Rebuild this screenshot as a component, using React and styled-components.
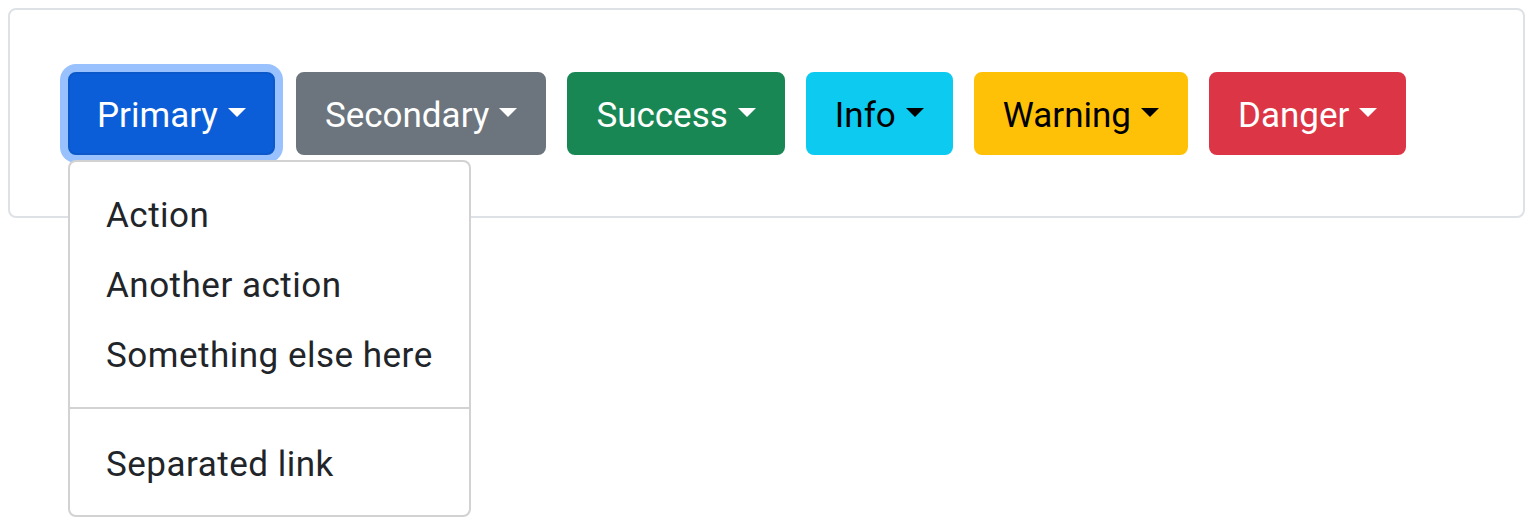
import React from "react";
import styled, { createGlobalStyle, css } from "styled-components";

const GlobalStyle = createGlobalStyle`
  html, body { min-height: 100%; }
  body {
    margin: 8px;
    background: #fff;
    font-family: "Roboto", "Liberation Sans", "Noto Sans", sans-serif;
    color: #212529;
  }
  #root { min-height: calc(100vh - 16px); }
  * { box-sizing: border-box; }
`;

const VARIANTS = {
  primary: { bg: "#0b5ed7", border: "#0a58ca", color: "#fff" },
  secondary: { bg: "#6c757d", border: "#6c757d", color: "#fff" },
  success: { bg: "#198754", border: "#198754", color: "#fff" },
  info: { bg: "#0dcaf0", border: "#0dcaf0", color: "#000" },
  warning: { bg: "#ffc107", border: "#ffc107", color: "#000" },
  danger: { bg: "#dc3545", border: "#dc3545", color: "#fff" },
};

const Page = styled.main`
  min-height: calc(100vh - 16px);
`;

const Card = styled.section`
  border: 2px solid #dee2e6;
  border-radius: 8px;
  padding: 62px 58px 61px;
`;

const Toolbar = styled.div`
  display: flex;
  gap: 21px;
  align-items: flex-start;
`;

const Dropdown = styled.div`
  position: relative;
`;

const Toggle = styled.button`
  display: inline-flex;
  align-items: center;
  font-family: inherit;
  font-size: 35px;
  line-height: 53px;
  padding: 15px 27px 11px;
  border: 2px solid ${(p) => VARIANTS[p.$variant].border};
  border-radius: 8px;
  background: ${(p) => VARIANTS[p.$variant].bg};
  color: ${(p) => VARIANTS[p.$variant].color};
  cursor: pointer;
  white-space: nowrap;
  ${(p) =>
    p.$open &&
    css`
      box-shadow: 0 0 0 8px rgba(49, 132, 253, 0.5);
    `}
`;

const Caret = styled.span`
  display: inline-block;
  margin-left: 10px;
  width: 0;
  height: 0;
  border-top: 9.5px solid currentColor;
  border-left: 9.5px solid transparent;
  border-right: 9.5px solid transparent;
  transform: translateY(-3px);
`;

const Menu = styled.div`
  position: absolute;
  top: calc(100% + 5px);
  left: 0;
  z-index: 10;
  min-width: 350px;
  background: #fff;
  border: 2px solid rgba(0, 0, 0, 0.175);
  border-radius: 8px;
  padding: 16.5px 0 17.5px;
`;

const MenuItem = styled.a`
  display: block;
  font-size: 35px;
  line-height: 52.5px;
  letter-spacing: 0.5px;
  padding: 11.5px 36px 6px;
  color: #212529;
  text-decoration: none;
  white-space: nowrap;
  cursor: pointer;
`;

const Divider = styled.hr`
  margin: 18.5px 0;
  border: 0;
  border-top: 2px solid rgba(0, 0, 0, 0.175);
  height: 0;
`;

const buttons = [
  ["primary", "Primary"],
  ["secondary", "Secondary"],
  ["success", "Success"],
  ["info", "Info"],
  ["warning", "Warning"],
  ["danger", "Danger"],
];

export default function App() {
  return (
    <Page>
      <GlobalStyle />
      <Card>
        <Toolbar>
          {buttons.map(([v, label], i) => (
            <Dropdown key={v}>
              <Toggle $variant={v} $open={i === 0}>
                {label}
                <Caret />
              </Toggle>
              {i === 0 && (
                <Menu>
                  <MenuItem>Action</MenuItem>
                  <MenuItem>Another action</MenuItem>
                  <MenuItem>Something else here</MenuItem>
                  <Divider />
                  <MenuItem>Separated link</MenuItem>
                </Menu>
              )}
            </Dropdown>
          ))}
        </Toolbar>
      </Card>
    </Page>
  );
}
